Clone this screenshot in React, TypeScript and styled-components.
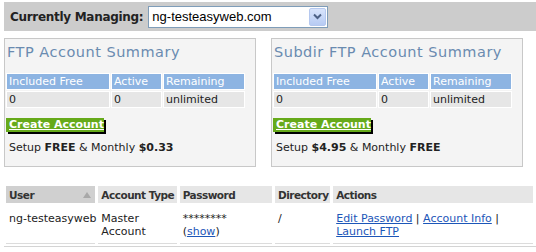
import React from 'react'
import styled, { createGlobalStyle } from 'styled-components'

const GlobalStyle = createGlobalStyle`
  html, body {
    margin: 0;
    padding: 0;
    background: #fff;
  }
  body {
    font-family: "DejaVu Sans", Verdana, sans-serif;
    font-size: 11px;
    color: #222;
  }
`

const Page = styled.div`
  width: 536px;
  padding: 2px 0 0 4px;
  box-sizing: border-box;
`

const ManageBar = styled.div`
  height: 29px;
  background: #cccccc;
  display: flex;
  align-items: center;
  padding-left: 6px;
  gap: 5px;
`

const ManageLabel = styled.span`
  font-weight: bold;
  font-size: 12px;
  letter-spacing: -0.3px;
  color: #222;
`

const SelectBox = styled.div`
  width: 174px;
  height: 20px;
  border: 1px solid #7f9db9;
  background: #fff;
  display: flex;
  align-items: center;
  justify-content: space-between;
  padding: 0 1px 0 3px;
  font-family: "Liberation Sans", Arial, sans-serif;
  font-size: 13px;
  color: #000;
  box-sizing: content-box;
`

const SelectArrow = styled.span`
  width: 15px;
  height: 16px;
  background: linear-gradient(#d8e4fb, #b7cbf3);
  border: 1px solid #b5c8ef;
  border-radius: 2px;
  display: flex;
  align-items: center;
  justify-content: center;
`

const Panels = styled.div`
  display: flex;
  gap: 15px;
  margin-top: 7px;
`

const Panel = styled.div`
  width: 249px;
  height: 127px;
  border: 1px solid #c8c8c8;
  background: #f4f4f4;
  padding: 0 0 0 1px;
  box-sizing: content-box;
`

const PanelTitle = styled.h2`
  margin: 5px 0 0 1px;
  height: 28px;
  font-size: 14.5px;
  font-weight: normal;
  color: #6a8bb0;
  letter-spacing: 0.5px;
  white-space: nowrap;
`

const SummaryTable = styled.table`
  border-collapse: separate;
  border-spacing: 1px;
  margin-left: -1px;
`

const SummaryHead = styled.th<{ $w: number }>`
  width: ${({ $w }) => $w - 4}px;
  height: 15px;
  background: #8db4e2;
  border: 1px solid #fff;
  color: #fff;
  font-weight: normal;
  text-align: left;
  padding: 0 2px;
  white-space: nowrap;
`

const SummaryCell = styled.td`
  height: 15px;
  background: #e6e6e6;
  border: 1px solid #fff;
  padding: 0 2px;
  white-space: nowrap;
`

const CreateButton = styled.a`
  display: block;
  margin: 9px 0 0 0;
  width: 98px;
  height: 14px;
  line-height: 14px;
  background: #66aa1a;
  box-shadow: 2px 2px 0 #000;
  color: #fff;
  font-weight: bold;
  text-decoration: underline;
  padding-left: 3px;
  box-sizing: border-box;
  white-space: nowrap;
  cursor: pointer;
`

const SetupLine = styled.div`
  margin: 9px 0 0 3px;
`

const AccountTable = styled.table`
  margin-top: 19px;
  border-collapse: separate;
  border-spacing: 3px 0;
  margin-left: -1px;
  table-layout: fixed;
  width: 533px;
`

const HeadCell = styled.th<{ $sorted?: boolean }>`
  height: 17px;
  background: ${({ $sorted }) => ($sorted ? '#d0d0d0' : '#e6e6e6')};
  font-weight: bold;
  font-size: 10.5px;
  color: #333;
  text-align: left;
  padding: 0 1px 0 3px;
  letter-spacing: -0.5px;
  white-space: nowrap;
  position: relative;
`

const SortArrow = styled.span`
  position: absolute;
  right: 4px;
  top: 6px;
  width: 0;
  height: 0;
  border-left: 4px solid transparent;
  border-right: 4px solid transparent;
  border-bottom: 6px solid #a8a8a8;
`

const BodyCell = styled.td`
  vertical-align: top;
  padding: 9px 2px 5px 3px;
  line-height: 13px;
  border-bottom: 1px solid #dcdcdc;
  white-space: nowrap;
`

const ActionLink = styled.a`
  color: #1c56b8;
  text-decoration: underline;
  cursor: pointer;
`

const BottomRule = styled.div`
  margin-top: 2px;
  height: 1px;
  background: #d4d4d4;
`

type Summary = {
  title: string
  setup: string
  monthly: string
}

const summaries: Summary[] = [
  { title: 'FTP Account Summary', setup: 'FREE', monthly: '$0.33' },
  { title: 'Subdir FTP Account Summary', setup: '$4.95', monthly: 'FREE' },
]

const columns = [89, 78, 92, 55, 199]

const SummaryPanel: React.FC<Summary> = ({ title, setup, monthly }) => (
  <Panel>
    <PanelTitle>{title}</PanelTitle>
    <SummaryTable>
      <thead>
        <tr>
          <SummaryHead $w={102}>Included Free</SummaryHead>
          <SummaryHead $w={49}>Active</SummaryHead>
          <SummaryHead $w={80}>Remaining</SummaryHead>
        </tr>
      </thead>
      <tbody>
        <tr>
          <SummaryCell>0</SummaryCell>
          <SummaryCell>0</SummaryCell>
          <SummaryCell>unlimited</SummaryCell>
        </tr>
      </tbody>
    </SummaryTable>
    <CreateButton>Create Account</CreateButton>
    <SetupLine>
      Setup <b>{setup}</b> &amp; Monthly <b>{monthly}</b>
    </SetupLine>
  </Panel>
)

const App: React.FC = () => (
  <Page>
    <GlobalStyle />
    <ManageBar>
      <ManageLabel>Currently Managing:</ManageLabel>
      <SelectBox>
        ng-testeasyweb.com
        <SelectArrow>
          <svg width="9" height="7" viewBox="0 0 9 7">
            <path d="M1 1.5 L4.5 5 L8 1.5" fill="none" stroke="#4d6185" strokeWidth="2" />
          </svg>
        </SelectArrow>
      </SelectBox>
    </ManageBar>
    <Panels>
      {summaries.map((s) => (
        <SummaryPanel key={s.title} {...s} />
      ))}
    </Panels>
    <AccountTable>
      <colgroup>
        {columns.map((w, i) => (
          <col key={i} style={{ width: w }} />
        ))}
      </colgroup>
      <thead>
        <tr>
          <HeadCell $sorted>
            User
            <SortArrow />
          </HeadCell>
          <HeadCell>Account Type</HeadCell>
          <HeadCell>Password</HeadCell>
          <HeadCell>Directory</HeadCell>
          <HeadCell>Actions</HeadCell>
        </tr>
      </thead>
      <tbody>
        <tr>
          <BodyCell>ng-testeasyweb</BodyCell>
          <BodyCell>
            Master
            <br />
            Account
          </BodyCell>
          <BodyCell>
            ********
            <br />(<ActionLink>show</ActionLink>)
          </BodyCell>
          <BodyCell>/</BodyCell>
          <BodyCell>
            <ActionLink>Edit Password</ActionLink> | <ActionLink>Account Info</ActionLink> |
            <br />
            <ActionLink>Launch FTP</ActionLink>
          </BodyCell>
        </tr>
      </tbody>
    </AccountTable>
    <BottomRule />
  </Page>
)

export default App
